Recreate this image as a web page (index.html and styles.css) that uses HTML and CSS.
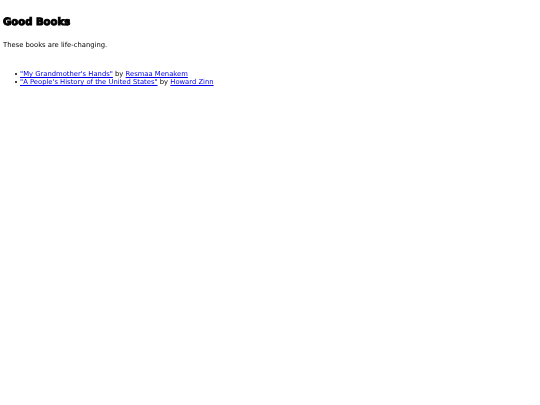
FILE: index.html
```html
<!DOCTYPE html>
<html lang="en">
<head>
  <meta charset="UTF-8">
  <title>Good Books</title>
  <link rel="stylesheet" href="styles.css">
</head>
<body>
  <main class="page">
    <h1>Good Books</h1>
    <p>These books are life-changing.</p>
    <ul>
      <li><a href="#">"My Grandmother's Hands"</a> by <a href="#">Resmaa Menakem</a></li>
      <li><a href="#">"A People's History of the United States"</a> by <a href="#">Howard Zinn</a></li>
    </ul>
  </main>
</body>
</html>
```

FILE: styles.css
```css
body { margin: 0; background: #fff; }
.page { padding: 3px; font-family: "DejaVu Sans", sans-serif; font-size: 6.8px; line-height: 8px; color: #000; text-rendering: geometricPrecision; filter: blur(0.3px); }
h1 { margin: 13px 0 0; font-size: 10.1px; line-height: 13px; font-weight: bold; -webkit-text-stroke: 1px #000; }
p { margin: 12px 0 0; }
ul { margin: 21px 0 0; padding-left: 11.5px; list-style: none; }
li::before { content: ""; display: inline-block; width: 2.5px; height: 2.5px; margin-right: 3px; border-radius: 50%; background: #000; vertical-align: 1px; }
a { color: #00e; }
```
